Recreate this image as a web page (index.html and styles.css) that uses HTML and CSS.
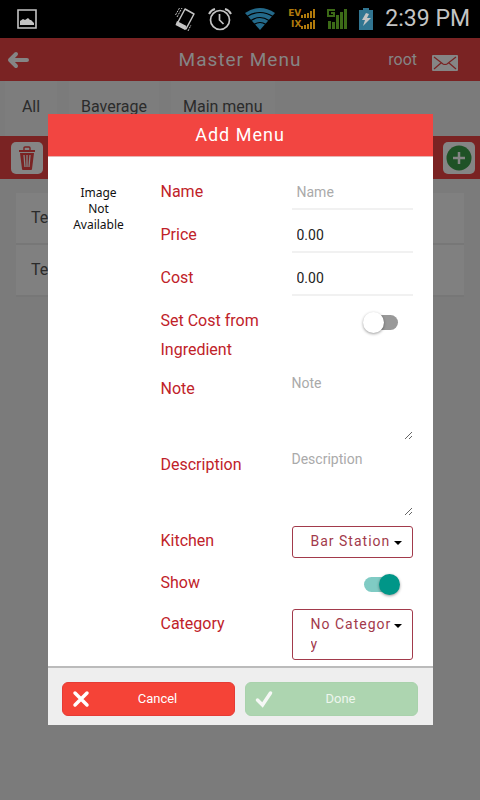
FILE: index.html
```html
<!DOCTYPE html>
<html lang="en">
<head>
<meta charset="utf-8">
<meta name="viewport" content="width=device-width, initial-scale=1">
<title>Master Menu</title>
<link rel="stylesheet" href="styles.css">
</head>
<body>
<div class="status">
  <svg class="status-photo" width="20" height="20" viewBox="0 0 20 20"><path d="M1 1h18v18H1z" fill="none" stroke="#c4c4c4" stroke-width="1.6"/><path d="M3 16v-4l3-2 2 1 3-2 2 2 1 0 3 3v2z" fill="#c4c4c4"/></svg>
  <svg width="22" height="26" viewBox="0 0 22 26"><path d="M11 3l9 5-8 15-9-5z" fill="none" stroke="#c4c4c4" stroke-width="1.500" stroke-linejoin="round"/><path d="M3 15l9.500 5-1.500 4-9.500-5z" fill="#c4c4c4"/><path d="M3 11l5-9M1.500 9l4-7M14 25l3-6" stroke="#c4c4c4" stroke-width="1" stroke-dasharray="2 1" fill="none"/></svg>
  <svg width="24" height="24" viewBox="0 0 24 24" fill="none" stroke="#c4c4c4"><circle cx="12" cy="13" r="9.500" stroke-width="1.700"/><path d="M11.500 7v6l4 4" stroke-width="1.700"/><path d="M1 7q2-4 6-5M17 2q4 1 6 5" stroke-width="2"/></svg>
  <svg width="32" height="24" viewBox="0 0 32 24"><path d="M1 6Q16-4 31 6L16 23z" fill="#23698a"/><path d="M3 9.500q13-8 26 0M7 13.500q9-6 18 0M10 17.500q6-4 12 0" fill="none" stroke="#000" stroke-width="1.200"/></svg>
  <div class="signal">
    <div class="signal-row"><span>EV</span><svg width="14" height="9" viewBox="0 0 14 9"><path d="M0 6h2v3H0zM3 5h2v4H3zM6 4h2v5H6zM9 2h2v7H9zM12 0h2v9h-2z" fill="#b07a0c"/></svg></div>
    <div class="signal-row"><span>IX</span><svg width="14" height="9" viewBox="0 0 14 9"><path d="M0 6h2v3H0zM3 5h2v4H3zM6 4h2v5H6zM9 2h2v7H9zM12 0h2v9h-2z" fill="#b07a0c"/></svg></div>
  </div>
  <svg width="20" height="22" viewBox="0 0 20 22"><path d="M1 13h3v8H1zM5 14h3v7H5zM9 7h3v14H9zM13 4h3v17h-3zM17 1h3v20h-3z" fill="#3c6a17"/><path d="M8 2H1v6h6V5H4" fill="none" stroke="#3c6a17" stroke-width="2"/></svg>
  <svg width="14" height="24" viewBox="0 0 14 24"><path d="M4 1h6v2h4v20H0V3h4z" fill="#317591"/><path d="M7 6l3 1-2 4h4l-8 8 2-6H3z" fill="#c4c4c4"/></svg>
  <span class="clock">2:39 PM</span>
</div>

<div class="app">
  <header class="bar">
    <button class="plain" aria-label="Back"><svg width="22" height="18" viewBox="0 0 22 18" fill="none" stroke="#858585" stroke-width="4" stroke-linecap="round" stroke-linejoin="round"><path d="M9 3L3 9l6 6M3 9h17"/></svg></button>
    <h1>Master Menu</h1>
    <div class="user"><span>root</span>
      <svg width="26" height="16" viewBox="0 0 26 16"><rect width="26" height="16" rx="1" fill="#858585"/><path d="M2 2l9 7q2 1 4 0l9-7M2 14l7-6M24 14l-7-6" fill="none" stroke="#7a2323" stroke-width="1.200"/></svg>
    </div>
  </header>
  <nav class="tabs"><a href="#all">All</a><a href="#baverage">Baverage</a><a href="#main">Main menu</a></nav>
  <div class="tools">
    <button class="tool" aria-label="Delete"><svg width="18" height="26" viewBox="0 0 18 26"><path d="M6 5V3q0-1 1-1h4q1 0 1 1v2" fill="none" stroke="#7a2323" stroke-width="1.400"/><path d="M1 5h16v2H1zM2 8h14l-2 16q0 1-1 1H5q-1 0-1-1z" fill="#7a2323"/><path d="M6 10l1 12M9 10v12M12 10l-1 12" stroke="#858585" stroke-width="1.300"/></svg></button>
    <button class="tool" aria-label="Add"><svg width="26" height="26" viewBox="0 0 26 26"><circle cx="13" cy="13" r="12.500" fill="#1f5226"/><path d="M13 7v12M7 13h12" stroke="#858585" stroke-width="2.500"/></svg></button>
  </div>
  <ul class="list"><li>Te</li><li>Te</li></ul>

  <div class="overlay">
    <form class="dialog" role="dialog" aria-labelledby="title">
      <h2 id="title">Add Menu</h2>
      <div class="content">
        <div class="photo">Image<br>Not<br>Available</div>
        <div class="fields">
          <div class="row"><label for="name">Name</label><input class="text" id="name" type="text" placeholder="Name"></div>
          <div class="row"><label for="price">Price</label><input class="text" id="price" type="text" value="0.00"></div>
          <div class="row"><label for="cost">Cost</label><input class="text" id="cost" type="text" value="0.00"></div>
          <div class="row"><label for="auto">Set Cost from Ingredient</label><input class="switch" id="auto" type="checkbox"></div>
          <div class="row"><label for="note">Note</label><textarea id="note" placeholder="Note"></textarea></div>
          <div class="row"><label for="desc">Description</label><textarea id="desc" placeholder="Description"></textarea></div>
          <div class="row"><label for="kitchen">Kitchen</label><select id="kitchen"><option>Bar Station</option></select></div>
          <div class="row show"><label for="show">Show</label><input class="switch" id="show" type="checkbox" checked></div>
          <div class="row"><label for="category">Category</label><select id="category" class="tall"><option>No Category</option></select></div>
        </div>
      </div>
      <footer>
        <button type="button" class="action cancel"><svg width="18" height="18" viewBox="0 0 18 18"><path d="M3 3l12 12M15 3L3 15" stroke="#fff" stroke-width="3.500" stroke-linecap="round"/></svg><span>Cancel</span></button>
        <button type="button" class="action done" disabled><svg width="18" height="18" viewBox="0 0 18 18"><path d="M2.500 10l5 5L15.500 3" fill="none" stroke="#f6f8f6" stroke-width="3.500" stroke-linecap="round"/></svg><span>Done</span></button>
      </footer>
    </form>
  </div>
</div>
</body>
</html>
```
FILE: styles.css
```css
* { box-sizing: border-box; }
body {
  margin: 0;
  min-height: 100vh;
  display: flex;
  flex-direction: column;
  background: #7b7b7b;
  color: #2b2b2b;
  font: 16px/20px Roboto, sans-serif;
}
button, input, textarea, select { font-family: inherit; margin: 0; }
svg { display: block; flex: none; }

.status {
  height: 38px;
  display: flex;
  align-items: center;
  gap: 12px;
  padding: 0 10px 0 17px;
  background: #000;
}
.status-photo { margin-right: auto; }
.signal { font: bold 9px/11px "DejaVu Sans", sans-serif; color: #b07a0c; }
.signal-row { display: flex; align-items: center; justify-content: flex-end; }
.clock { color: #c4c4c4; font-size: 23px; line-height: 28px; }

.app { position: relative; flex: 1; }
.bar {
  height: 43px;
  display: grid;
  grid-template-columns: minmax(0, 1fr) auto minmax(0, 1fr);
  align-items: center;
  padding: 0 22px;
  background: #7a2323;
  color: #858585;
}
.plain { justify-self: start; margin-left: -15px; border: 0; padding: 0; background: none; }
h1 { margin: 0; font-size: 19px; font-weight: 400; letter-spacing: 1px; }
.user { justify-self: end; display: flex; align-items: center; gap: 15px; }
.user svg { margin-top: 6px; }

.tabs { height: 55px; display: flex; gap: 12px; padding: 0 5px; }
.tabs a {
  min-width: 52px;
  padding: 16px 12px;
  color: inherit;
  text-align: center;
  text-decoration: none;
  background: #7d7d7d;
}
.tools {
  height: 43px;
  display: flex;
  align-items: center;
  justify-content: space-between;
  padding: 0 5px 0 11px;
  background: #7a2323;
}
.tool {
  width: 32px;
  height: 32px;
  display: grid;
  place-items: center;
  border: 0;
  border-radius: 5px;
  padding: 0;
  background: #858585;
}
.list { list-style: none; margin: 14px 16px; padding: 0; }
.list li { padding: 15px; border-bottom: 2px solid #777; background: #808080; }

.overlay {
  position: absolute;
  inset: 0;
  display: grid;
  grid-template-columns: calc(80% + 1px);
  place-content: center;
}
.dialog { background: #fff; }
h2 {
  margin: 0;
  height: 43px;
  border-bottom: 1px solid #e6b5b3;
  background: #f24541;
  color: #fff;
  font-size: 18px;
  font-weight: 400;
  line-height: 42px;
  letter-spacing: 1px;
  text-align: center;
}
.content { display: flex; padding: 10px 20px 6px 25px; }
.photo {
  width: 52px;
  padding-top: 18px;
  color: #111;
  font: 12px/16px "Noto Sans", sans-serif;
  text-align: center;
}
.fields { flex: 1; margin-left: 36px; }
.row {
  display: grid;
  grid-template-columns: 131px 1fr;
  align-items: start;
  padding-top: 10px;
}
.row label { width: 110px; color: #bf2229; line-height: 29px; }
.text, textarea {
  width: 100%;
  border: 0;
  padding: 0;
  background: none;
  color: #222;
  font-size: 14px;
  line-height: 18px;
}
.text { height: 33px; padding: 0 5px; border-bottom: 2px solid #f1f1f1; }
textarea { display: block; height: 66px; resize: vertical; }
::placeholder { color: #aaa; }

.switch {
  appearance: none;
  position: relative;
  width: 34px;
  height: 15px;
  margin: 9px 15px 0 0;
  justify-self: end;
  border-radius: 8px;
  background: #999;
}
.switch::before {
  content: "";
  position: absolute;
  top: -3px;
  left: -1px;
  width: 21px;
  height: 21px;
  border-radius: 50%;
  background: #fff;
  box-shadow: 0 1px 3px rgba(0, 0, 0, .4);
}
.switch:checked { background: #80cbc4; }
.switch:checked::before { left: 15px; background: #009688; }
.show { padding-bottom: 2px; }

select {
  appearance: base-select;
  display: flex;
  align-items: flex-start;
  gap: 0;
  width: 100%;
  min-height: 32px;
  border: 1px solid #a23a4b;
  border-radius: 3px;
  padding: 4px 10px 5px 18px;
  background: #fff;
  color: #a23a4b;
  font-size: 14px;
  line-height: 20px;
  letter-spacing: 1px;
  white-space: normal;
  word-break: break-all;
}
select::picker-icon {
  content: "";
  margin-top: 10px;
  border: 4px solid transparent;
  border-top-color: #000;
  border-bottom: 0;
}
.tall { min-height: 51px; }

footer {
  display: flex;
  gap: 10px;
  padding: 14px 15px 9px 14px;
  border-top: 2px solid #bbb;
  background: #eee;
}
.action {
  flex: 1;
  height: 34px;
  display: flex;
  align-items: center;
  border: 1px solid #e53b34;
  border-radius: 6px;
  padding: 0 8px 0 9px;
  background: #f54337;
  color: #fff;
  font-size: 13px;
}
.action span { flex: 1; }
.done { border-color: #a9d2ac; background: #add5b0; color: #eef5ee; }
```
